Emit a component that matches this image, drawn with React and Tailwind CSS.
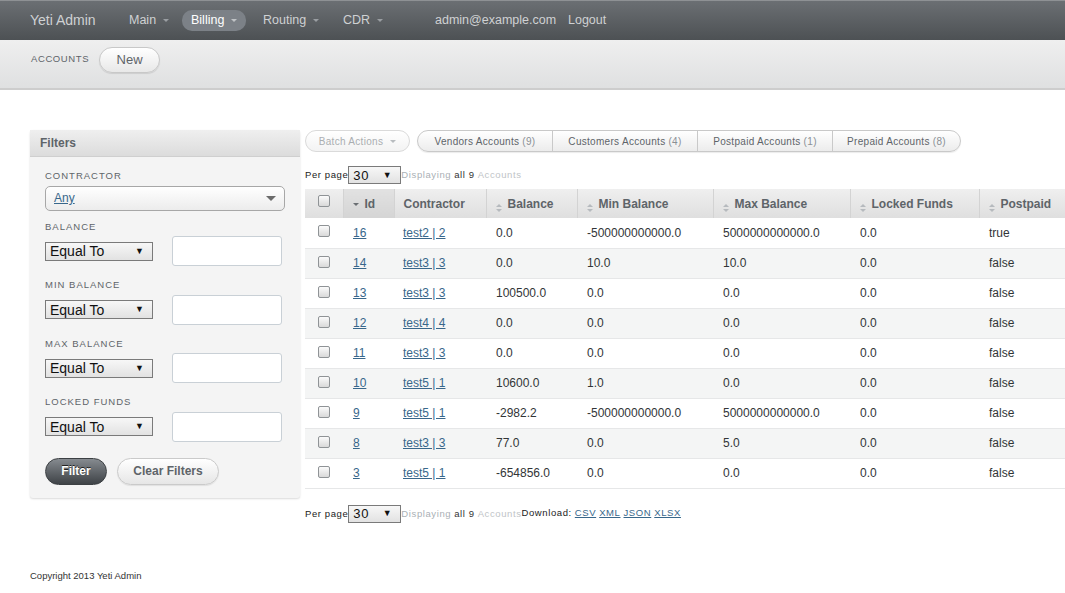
import React from "react";

const rows = [
    { id: 16, contractor: "test2 | 2", balance: "0.0", min: "-500000000000.0", max: "5000000000000.0", locked: "0.0", postpaid: "true" },
    { id: 14, contractor: "test3 | 3", balance: "0.0", min: "10.0", max: "10.0", locked: "0.0", postpaid: "false" },
    { id: 13, contractor: "test3 | 3", balance: "100500.0", min: "0.0", max: "0.0", locked: "0.0", postpaid: "false" },
    { id: 12, contractor: "test4 | 4", balance: "0.0", min: "0.0", max: "0.0", locked: "0.0", postpaid: "false" },
    { id: 11, contractor: "test3 | 3", balance: "0.0", min: "0.0", max: "0.0", locked: "0.0", postpaid: "false" },
    { id: 10, contractor: "test5 | 1", balance: "10600.0", min: "1.0", max: "0.0", locked: "0.0", postpaid: "false" },
    { id: 9, contractor: "test5 | 1", balance: "-2982.2", min: "-500000000000.0", max: "5000000000000.0", locked: "0.0", postpaid: "false" },
    { id: 8, contractor: "test3 | 3", balance: "77.0", min: "0.0", max: "5.0", locked: "0.0", postpaid: "false" },
    { id: 3, contractor: "test5 | 1", balance: "-654856.0", min: "0.0", max: "0.0", locked: "0.0", postpaid: "false" },
];

const scopes = [
    ["Vendors Accounts", 9, "w-[134px]"],
    ["Customers Accounts", 4, "w-[145px]"],
    ["Postpaid Accounts", 1, "w-[135px]"],
    ["Prepaid Accounts", 8, "w-[128px]"],
];

const Caret = ({ color = "border-t-[#9a9ea2]" }) => (
    <span className={`ml-[7px] inline-block h-0 w-0 border-x-[3px] border-t-[3px] border-x-transparent ${color}`} />
);

const SortArrows = ({ active }) => (
    active ? (
        <span className="mr-[6px] inline-block h-0 w-0 border-x-[3px] border-t-[3px] border-x-transparent border-t-[#6a6e72] relative top-[-2px]" />
    ) : (
        <span className="mr-[6px] inline-flex flex-col gap-[2px] relative top-[-1px]">
            <span className="h-0 w-0 border-x-[3px] border-b-[3px] border-x-transparent border-b-[#b6babe]" />
            <span className="h-0 w-0 border-x-[3px] border-t-[3px] border-x-transparent border-t-[#b6babe]" />
        </span>
    )
);

const Checkbox = () => (
    <span className="inline-block h-[12px] w-[12px] rounded-[2px] border border-[#8f9396] bg-gradient-to-b from-[#fbfbfb] to-[#d9d9d9]" />
);

const NativeSelect = ({ value, w = "w-[108px]", h = "h-[19px]", text = "text-[14px]" }) => (
    <div className={`${w} ${h} ${text} flex items-center justify-between border border-[#7a7a7a] bg-gradient-to-b from-[#f7f7f7] to-[#e2e2e2] pl-[4px] pr-[8px] text-[#111] leading-none`}>
        <span>{value}</span>
        <span className="text-[9px]">▼</span>
    </div>
);

const FilterNumber = ({ label, first }) => (
    <div className={first ? "mt-[11px]" : "mt-[14px]"}>
        <div className="text-[9.5px] tracking-[1px] text-[#5e6469] uppercase leading-none">{label}</div>
        <div className="mt-[5px] flex items-center">
            <NativeSelect value="Equal To" />
            <div className="ml-[19px] h-[30px] w-[110px] rounded-[3px] border border-[#c9d0d6] bg-white" />
        </div>
    </div>
);

const cols = [
    { key: "id", label: "Id", w: "w-[51px]", sortable: true, active: true },
    { key: "contractor", label: "Contractor", w: "w-[92px]" },
    { key: "balance", label: "Balance", w: "w-[91px]", sortable: true },
    { key: "min", label: "Min Balance", w: "w-[136px]", sortable: true },
    { key: "max", label: "Max Balance", w: "w-[137px]", sortable: true },
    { key: "locked", label: "Locked Funds", w: "w-[129px]", sortable: true },
    { key: "postpaid", label: "Postpaid", w: "w-[100px]", sortable: true },
];

const PerPage = () => (
    <div className="flex items-center text-[9.5px] tracking-[0.6px] leading-none">
        <span className="text-[#222]">Per page</span>
        <NativeSelect value="30" w="w-[53px]" h="h-[18px]" text="text-[13px]" />
        <span className="text-[#aab0b5]">Displaying</span>
        <span className="ml-[3px] text-[#333]">all 9</span>
        <span className="ml-[3px] text-[#c0c4c7]">Accounts</span>
    </div>
);

const App = () => {
    return (
        <div className="w-[1065px] h-[593px] overflow-hidden bg-white font-['Liberation_Sans',Arial,sans-serif] text-[#323537]">
            {/* top nav */}
            <div className="h-[40px] border-t border-[#8e9194] bg-gradient-to-b from-[#6b6f73] to-[#4d5154] flex items-center pl-[30px] text-[#cfd1d3] text-[12.5px]">
                <span className="w-[90px] text-[14px]">Yeti Admin</span>
                <span className="w-[62px] pl-[9px] flex items-center">Main<Caret /></span>
                <span className="w-[64px] pl-[9px] h-[21px] rounded-[10px] bg-[#7c8187] text-white flex items-center">Billing<Caret color="border-t-[#c0c3c6]" /></span>
                <span className="w-[80px] pl-[17px] flex items-center">Routing<Caret /></span>
                <span className="w-[92px] pl-[17px] flex items-center">CDR<Caret /></span>
                <span className="w-[150px] pl-[17px]">admin@example.com</span>
                <span>Logout</span>
            </div>

            {/* title bar */}
            <div className="h-[50px] bg-gradient-to-b from-[#efefef] to-[#dfe0e1] border-b-2 border-[#cdcdcd] flex items-start pt-[6px] pl-[31px]">
                <div className="h-[27px] flex items-center">
                    <span className="text-[9.5px] tracking-[0.6px] text-[#5e6469]">ACCOUNTS</span>
                    <button className="ml-[10px] h-[26px] w-[61px] rounded-full border border-[#c8c8c8] bg-gradient-to-b from-white to-[#e8e8e8] text-[13px] text-[#5e6469] shadow-[0_1px_1px_rgba(0,0,0,0.1)]">New</button>
                </div>
            </div>

            <div className="flex pl-[30px] pt-[40px]">
                {/* sidebar */}
                <div className="w-[270px] shrink-0">
                    <div className="rounded-[3px] bg-[#f4f4f4] shadow-[0_1px_2px_rgba(0,0,0,0.15)] pb-[13px]">
                        <div className="h-[27px] border-b border-[#cfcfcf] bg-gradient-to-b from-[#efefef] to-[#dcdcdc] flex items-center pl-[10px] text-[12px] font-bold text-[#5e6469]">Filters</div>
                        <div className="px-[15px] pt-[14px]">
                            <div className="text-[9.5px] tracking-[1px] text-[#5e6469] leading-none">CONTRACTOR</div>
                            <div className="mt-[5px] h-[25px] w-[240px] rounded-[5px] border border-[#a7a7a7] bg-gradient-to-b from-white to-[#ececec] flex items-center justify-between pl-[8px] pr-[8px]">
                                <span className="text-[12px] text-[#38678b] underline">Any</span>
                                <span className="h-0 w-0 border-x-[5px] border-t-[5px] border-x-transparent border-t-[#6b6b6b]" />
                            </div>
                            <FilterNumber label="Balance" first />
                            <FilterNumber label="Min Balance" />
                            <FilterNumber label="Max Balance" />
                            <FilterNumber label="Locked Funds" />
                            <div className="mt-[16px] flex items-center">
                                <button className="h-[27px] w-[62px] rounded-full border border-[#3c4043] bg-gradient-to-b from-[#868b90] to-[#3f4347] text-[12px] font-bold text-white [text-shadow:0_-1px_0_#222]">Filter</button>
                                <button className="ml-[10px] h-[27px] w-[102px] rounded-full border border-[#cacaca] bg-gradient-to-b from-white to-[#e6e6e6] text-[12px] font-bold text-[#5e6469] shadow-[0_1px_1px_rgba(0,0,0,0.08)]">Clear Filters</button>
                            </div>
                        </div>
                    </div>
                </div>

                {/* main */}
                <div className="ml-[5px] flex-1 min-w-0">
                    <div className="flex items-center">
                        <div className="h-[22px] w-[105px] rounded-full border border-[#dadada] bg-gradient-to-b from-white to-[#f3f3f3] flex items-center justify-center text-[10px] tracking-[0.3px] text-[#aaaeb1]">
                            Batch Actions<Caret color="border-t-[#b8bcbf]" />
                        </div>
                        <div className="ml-[7px] flex h-[22px] rounded-full border border-[#c9c9c9] bg-gradient-to-b from-white to-[#ececec] shadow-[0_1px_1px_rgba(0,0,0,0.08)] overflow-hidden">
                            {scopes.map(([name, count, w], i) => (
                                <div key={name} className={`${w} flex items-center justify-center text-[10px] tracking-[0.3px] text-[#5e6469] ${i > 0 ? "border-l border-[#c9c9c9]" : ""}`}>
                                    {name}<span className="ml-[3px] text-[#8a9095]">({count})</span>
                                </div>
                            ))}
                        </div>
                    </div>

                    <div className="mt-[14px]">
                        <PerPage />
                    </div>

                    <table className="mt-[5px] table-fixed border-collapse w-[774px] text-[12px]">
                        <thead>
                            <tr className="h-[29px] bg-gradient-to-b from-[#efefef] to-[#dfdfdf]">
                                <th className="w-[38px] border-r border-[#d3d3d3] text-center align-middle">
                                    <span className="relative top-[-1px]"><Checkbox /></span>
                                </th>
                                {cols.map(c => (
                                    <th key={c.key} className={`${c.w} border-r border-[#d3d3d3] pl-[9px] text-left font-bold text-[#5e6469] whitespace-nowrap ${c.active ? "bg-gradient-to-b from-[#e2e2e2] to-[#d4d4d4]" : ""}`}>
                                        {c.sortable && <SortArrows active={c.active} />}{c.label}
                                    </th>
                                ))}
                            </tr>
                        </thead>
                        <tbody>
                            {rows.map((r, i) => (
                                <tr key={r.id} className={`h-[30px] border-b border-[#e6e7e8] ${i % 2 === 1 ? "bg-[#f4f5f5]" : "bg-white"}`}>
                                    <td className="text-center align-top pt-[6px]"><Checkbox /></td>
                                    <td className="pl-[10px]"><span className="text-[#38678b] underline">{r.id}</span></td>
                                    <td className="pl-[9px] whitespace-nowrap"><span className="text-[#38678b] underline">{r.contractor}</span></td>
                                    <td className="pl-[10px]">{r.balance}</td>
                                    <td className="pl-[10px]">{r.min}</td>
                                    <td className="pl-[10px]">{r.max}</td>
                                    <td className="pl-[10px]">{r.locked}</td>
                                    <td className="pl-[10px]">{r.postpaid}</td>
                                </tr>
                            ))}
                        </tbody>
                    </table>

                    <div className="mt-[16px] flex items-center">
                        <PerPage />
                        <span className="text-[9.5px] tracking-[0.6px] text-[#222]">Download:</span>
                        <span className="ml-[3px] flex gap-[3px] text-[9.5px] tracking-[0.6px] text-[#38678b] underline">
                            <span>CSV</span><span>XML</span><span>JSON</span><span>XLSX</span>
                        </span>
                    </div>
                </div>
            </div>

            <div className="mt-[46px] pl-[30px] text-[9.5px] text-[#333]">Copyright 2013 Yeti Admin</div>
        </div>
    );
};

export default App;
